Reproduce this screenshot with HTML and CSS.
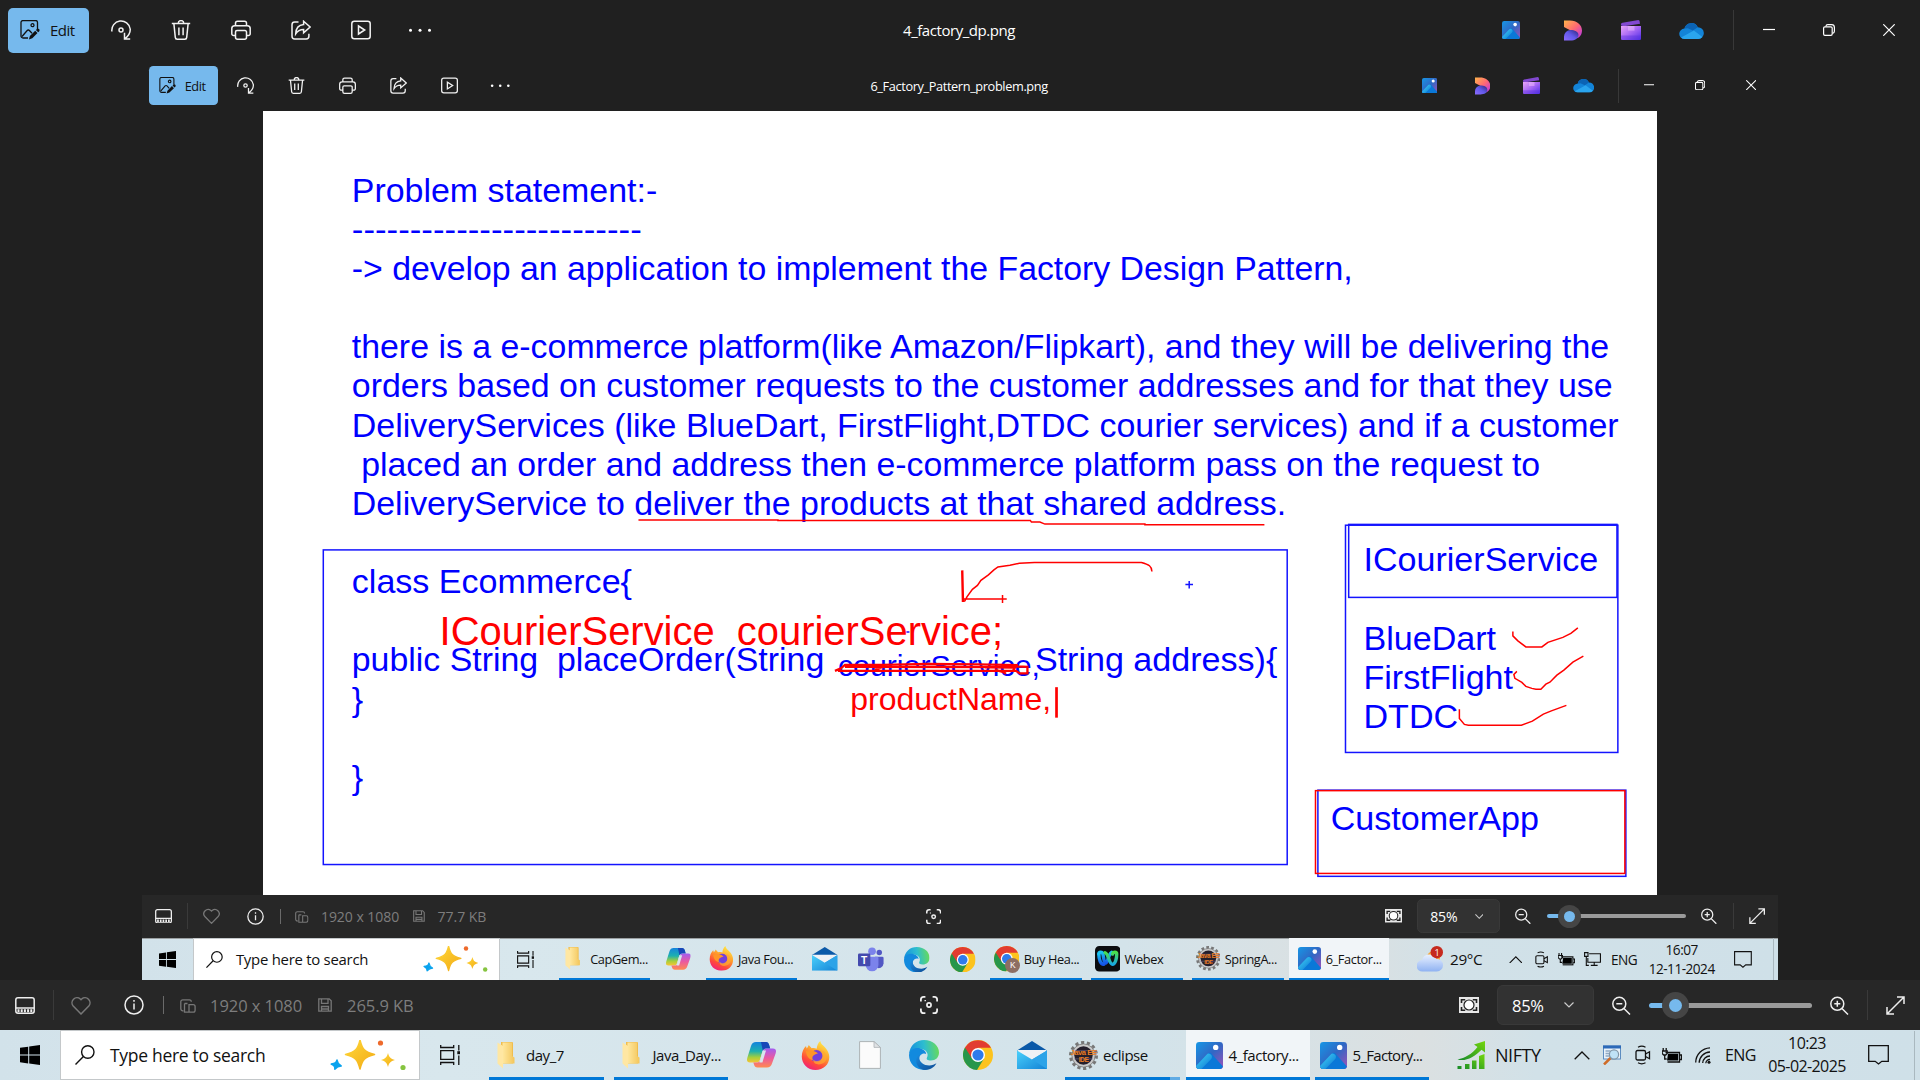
FILE: index.html
```html
<!DOCTYPE html>
<html lang="en">
<head>
<meta charset="utf-8">
<title>4_factory_dp.png</title>
<link rel="stylesheet" href="styles.css">
</head>
<body>
<svg class="sprite" width="0" height="0" aria-hidden="true">
  <defs>
    <linearGradient id="gPhoto" x1="0" y1="0" x2="1" y2="1"><stop offset="0" stop-color="#1697e6"/><stop offset=".5" stop-color="#3167c4"/><stop offset="1" stop-color="#a052b8"/></linearGradient>
    <linearGradient id="gHill" x1="0" y1="0" x2="1" y2="1"><stop offset="0" stop-color="#43d8f6"/><stop offset="1" stop-color="#0a73d4"/></linearGradient>
    <linearGradient id="gDesA" x1="0" y1="0" x2="1" y2="1"><stop offset="0" stop-color="#ffb54a"/><stop offset=".5" stop-color="#ff6a72"/><stop offset="1" stop-color="#b431f0"/></linearGradient>
    <linearGradient id="gDesB" x1="0" y1="1" x2="1" y2="0"><stop offset="0" stop-color="#8d6cff"/><stop offset=".5" stop-color="#6259ea"/><stop offset="1" stop-color="#2b2579"/></linearGradient>
    <linearGradient id="gClip" x1="0" y1="0" x2="1" y2="1"><stop offset="0" stop-color="#eaa5f8"/><stop offset=".5" stop-color="#a566f3"/><stop offset="1" stop-color="#4a2be6"/></linearGradient>
    <linearGradient id="gFolder" x1="0" y1="0" x2="1" y2="0"><stop offset="0" stop-color="#ffe8a0"/><stop offset="1" stop-color="#f3c65b"/></linearGradient>
    <linearGradient id="gCopA" x1="0" y1="0" x2="0" y2="1"><stop offset="0" stop-color="#1583dd"/><stop offset=".45" stop-color="#1db0b0"/><stop offset=".75" stop-color="#a6cf3c"/><stop offset="1" stop-color="#f8c533"/></linearGradient>
    <linearGradient id="gCopB" x1="0" y1="0" x2="0" y2="1"><stop offset="0" stop-color="#a35cf0"/><stop offset=".5" stop-color="#ea5aa0"/><stop offset="1" stop-color="#ff8a50"/></linearGradient>
    <linearGradient id="gFox" x1=".8" y1="0" x2=".3" y2="1"><stop offset="0" stop-color="#fff04a"/><stop offset=".4" stop-color="#ffa52e"/><stop offset=".75" stop-color="#ff4a3a"/><stop offset="1" stop-color="#f0207c"/></linearGradient>
    <linearGradient id="gEdge" x1="0" y1=".3" x2="1" y2=".2"><stop offset="0" stop-color="#1591dd"/><stop offset=".5" stop-color="#2dbdd0"/><stop offset="1" stop-color="#6bdc53"/></linearGradient>
    <linearGradient id="gEdgeB" x1="0" y1="0" x2="1" y2="1"><stop offset="0" stop-color="#1a8be0"/><stop offset="1" stop-color="#0d4a93"/></linearGradient>
    <linearGradient id="gMail" x1="0" y1="0" x2="1" y2="1"><stop offset="0" stop-color="#4ad0fb"/><stop offset="1" stop-color="#1383d6"/></linearGradient>
    <linearGradient id="gStar" x1="0" y1="0" x2="1" y2="1"><stop offset="0" stop-color="#ffd83a"/><stop offset="1" stop-color="#f2aa14"/></linearGradient>
    <linearGradient id="gNifty" x1="0" y1="1" x2="1" y2="0"><stop offset="0" stop-color="#158a2a"/><stop offset="1" stop-color="#74d60c"/></linearGradient>
    <linearGradient id="gCloud" x1="0" y1="0" x2="0" y2="1"><stop offset="0" stop-color="#e8f0ff"/><stop offset="1" stop-color="#8fb2f2"/></linearGradient>
    <linearGradient id="gWebexA" x1="0" y1="0" x2="0" y2="1"><stop offset="0" stop-color="#19c4f0"/><stop offset="1" stop-color="#1554e8"/></linearGradient>
    <linearGradient id="gWebexB" x1="0" y1="0" x2="0" y2="1"><stop offset="0" stop-color="#4be04a"/><stop offset="1" stop-color="#18a8e0"/></linearGradient>
  </defs>

  <symbol id="edit" viewBox="0 0 20 20"><g fill="none" stroke="#111" stroke-width="1.3"><path d="M8 18H3a2 2 0 0 1-2-2V2.500a2 2 0 0 1 2-2h12.500a2 2 0 0 1 2 2V9"/><path d="M2 16.500l5.200-6a1.500 1.500 0 0 1 2.200 0l2.600 2.800"/><circle cx="12.500" cy="5.200" r="1.500"/></g><path d="M18.400 8.700a1.600 1.600 0 0 1 .7 2.700l-.9.900-2.300-2.300 1-1a1.700 1.700 0 0 1 1.500-.3zM15.200 10.700l2.300 2.400-5.200 5.200-3.400 1.200 1-3.500z" fill="#111"/></symbol>
  <symbol id="rotate" viewBox="0 0 20 20"><path d="M.9 11.500A9.200 9.200 0 1 1 19.200 9c.3 4.200-2.300 7.400-5.400 9.800M13.500 12.800v6.200h5.700"/><circle cx="10" cy="10" r="2"/></symbol>
  <symbol id="trash" viewBox="0 0 20 20"><path d="M.8 3.600h18.400M7.200 3.400a2.800 2.800 0 0 1 5.600 0M2.900 3.800l1.400 13.600a1.900 1.900 0 0 0 1.900 1.800h7.600a1.900 1.900 0 0 0 1.900-1.800l1.400-13.600M7.900 7.500v7.700M12.100 7.500v7.700"/></symbol>
  <symbol id="print" viewBox="0 0 20 20"><path d="M4.500 5.800V3.200a2 2 0 0 1 2-2h7a2 2 0 0 1 2 2v2.600M4.500 15.500H2.600a1.800 1.800 0 0 1-1.800-1.800V8.600a2.800 2.800 0 0 1 2.800-2.800h12.800a2.800 2.800 0 0 1 2.800 2.800v5.100a1.800 1.800 0 0 1-1.800 1.800h-1.900M6 10.500h8a1.500 1.500 0 0 1 1.500 1.500v5.200a2 2 0 0 1-2 2h-7a2 2 0 0 1-2-2V12A1.500 1.500 0 0 1 6 10.500z"/></symbol>
  <symbol id="share" viewBox="0 0 20 20"><path d="M7.500 2H3.700A2.700 2.700 0 0 0 1 4.700v11.500a2.700 2.700 0 0 0 2.700 2.700h11.500a2.700 2.700 0 0 0 2.700-2.700v-2.400M12.600 1.200l6.500 5.800-6.500 5.800V9.600c-3.800 0-6 1.200-7.900 4.200.2-5.100 2.700-8.700 7.900-9.200z"/></symbol>
  <symbol id="play" viewBox="0 0 20 20"><rect x=".8" y="1.300" width="18.400" height="17.400" rx="2.500"/><path d="M7.500 6v8l6.200-4z"/></symbol>
  <symbol id="dots" viewBox="0 0 24 20"><g fill="#fff" stroke="none"><circle cx="2.500" cy="10.300" r="1.500"/><circle cx="12" cy="10.300" r="1.500"/><circle cx="21.500" cy="10.300" r="1.500"/></g></symbol>

  <symbol id="photos" viewBox="0 0 20 20"><rect width="20" height="20" rx="2.500" fill="url(#gPhoto)"/><path d="M0 18.200l8.600-9.400a2 2 0 0 1 3 0l8.400 9.400a2.500 2.500 0 0 1-2.500 1.800h-15A2.500 2.500 0 0 1 0 18.200z" fill="#0a78d8"/><path d="M0 17.700l7.800-8.300a2.300 2.300 0 0 1 4 1.700c0 .6-.3 1.200-.7 1.600L4 20H2.500A2.500 2.500 0 0 1 0 17.700z" fill="url(#gHill)"/><circle cx="14.600" cy="4" r="2" fill="#fff"/></symbol>
  <symbol id="designer" viewBox="0 0 18 20"><path d="M0 0h6c7 0 12 4.500 12 10 0 4.500-2.500 7-5.500 7.800l-4-6.800L0 6.500z" fill="url(#gDesA)"/><path d="M0 20v-4a6.500 6.500 0 0 1 6.500-6.500c4 0 8 1.500 8 5 0 3.500-3.500 5.500-8 5.500z" fill="url(#gDesB)"/></symbol>
  <symbol id="clipchamp" viewBox="0 0 20 20"><path d="M0 5.500v-1c0-1 .6-1.500 1.500-1.700L17.500 0l1 .8.500 3L3 6.200z" fill="#8248d0"/><path d="M0 6h20v12.500a1.500 1.500 0 0 1-1.500 1.500h-17A1.500 1.500 0 0 1 0 18.500z" fill="url(#gClip)"/><path d="M7 6h6.500v4.600H7z" fill="#f5c6ff" opacity=".45"/><path d="M0 15.500h20v3a1.500 1.500 0 0 1-1.500 1.500h-17A1.500 1.500 0 0 1 0 18.500z" fill="#5a32dc" opacity=".4"/></symbol>
  <symbol id="onedrive" viewBox="0 0 26 18"><path d="M5.500 7A7.500 7.500 0 0 1 19.600 5.500a6.200 6.200 0 0 1 .4 12.500H5.500A5.500 5.500 0 0 1 5.500 7z" fill="#1384d8"/><path d="M5.500 7A7.500 7.500 0 0 1 19.600 5.500L14.500 9 9 6.500z" fill="#0b63b4"/><path d="M2 16.500L15.500 9l9 7a6 6 0 0 1-4.500 2H5.500a5.500 5.500 0 0 1-3.500-1.500z" fill="#2aa5ee"/></symbol>

  <symbol id="min" viewBox="0 0 12 12"><path d="M0 5.500h12"/></symbol>
  <symbol id="restore" viewBox="0 0 12 12"><rect x=".6" y="2.800" width="8.600" height="8.600" rx="1.300"/><path d="M2.800 2.500C3 1.300 3.600.7 4.800.7h3.800a2.800 2.800 0 0 1 2.800 2.800v3.800c0 1.200-.8 1.800-1.900 2"/></symbol>
  <symbol id="close" viewBox="0 0 12 12"><path d="M.3.3l11.400 11.400M11.700.3L.3 11.700"/></symbol>

  <symbol id="film" viewBox="0 0 20 17"><rect x=".8" y=".8" width="18.400" height="15.400" rx="2.200"/><path d="M1 11h18"/><path d="M2.500 13.800h15" stroke-width="3" stroke-dasharray="2 1.200"/></symbol>
  <symbol id="heart" viewBox="0 0 20 19"><path d="M10 18l-7.800-8a5 5 0 0 1 7.100-7l.7.700.7-.7a5 5 0 0 1 7.100 7z"/></symbol>
  <symbol id="info" viewBox="0 0 20 20"><circle cx="10" cy="10" r="9"/><path d="M10 8.500v6M10 5v1.800"/></symbol>
  <symbol id="dims" viewBox="0 0 16 14"><path d="M3.500 11.800H2.800A2 2 0 0 1 .8 9.800V2.800a2 2 0 0 1 2-2h6.500a2 2 0 0 1 2 2M4.500 4.500v8.700h8.700a1.900 1.900 0 0 0 1.900-1.900V7.500a1.900 1.900 0 0 0-1.900-1.900H9v7.500M4.500 4.500h3"/></symbol>
  <symbol id="save" viewBox="0 0 14 14"><path d="M.8.800h10.400l2 2v10.400H.8zM3.500.8v4.500h6.500V.8M3.500 13V8.500h7V13M4 11h6"/></symbol>
  <symbol id="scan" viewBox="0 0 20 20"><path d="M1 6V4a3 3 0 0 1 3-3h2M14 1h2a3 3 0 0 1 3 3v2M19 14v2a3 3 0 0 1-3 3h-2M6 19H4a3 3 0 0 1-3-3v-2" stroke-width="2"/><circle cx="10" cy="10" r="2.300" stroke-width="1.900"/><path d="M5 5.200h1.600" stroke-width="1.500"/></symbol>
  <symbol id="fit" viewBox="0 0 20 16"><rect width="20" height="16" fill="#e8e8e8" stroke="none"/><path d="M2.500 6V2.800h3.700M13.800 2.800h3.700V6M17.500 10v3.200h-3.700M6.200 13.200H2.500V10" stroke="#222" stroke-width="1.600"/><circle cx="10" cy="8" r="5.600" fill="#222" stroke="none"/><circle cx="10" cy="8" r="4.400" fill="#fff" stroke="none"/></symbol>
  <symbol id="chev" viewBox="0 0 10 6"><path d="M.5.500L5 5 9.500.5"/></symbol>
  <symbol id="zout" viewBox="0 0 19 19"><circle cx="7.300" cy="7.800" r="6.500"/><path d="M12 12.500l6 6M4.300 7.800h6"/></symbol>
  <symbol id="zin" viewBox="0 0 19 19"><circle cx="7.300" cy="7.800" r="6.500"/><path d="M12 12.500l6 6M4.300 7.800h6M7.300 4.800v6"/></symbol>
  <symbol id="expand" viewBox="0 0 19 19"><path d="M1 18L18 1M11 1h7v7M1 11v7h7"/></symbol>

  <symbol id="start" viewBox="0 0 20 20"><path d="M0 2.800L8.200 1.700v7.800H0zM9.200 1.500L20 0v9.500H9.200zM0 10.500h8.200v7.900L0 17.300zM9.200 10.500H20V20L9.200 18.500z" fill="#000"/></symbol>
  <symbol id="loupe" viewBox="0 0 20 20"><g fill="none" stroke="#111" stroke-width="1.400"><circle cx="12.800" cy="7" r="6.200"/><path d="M8.400 11.500L.5 19.500"/></g></symbol>
  <symbol id="sparkles" viewBox="0 0 78 32"><path d="M30 0c2.300 9.500 4.500 12 14.500 14.500C34.500 17 32.300 19.500 30 29c-2.300-9.500-4.500-12-14.500-14.500C25.500 12 27.700 9.500 30 0z" fill="url(#gStar)" stroke="url(#gStar)" stroke-width="1.500" stroke-linejoin="round"/><path d="M58 13c1.200 4.300 2.300 5.600 7 7-4.700 1.400-5.800 2.700-7 7-1.200-4.300-2.300-5.600-7-7 4.700-1.400 5.800-2.700 7-7z" fill="url(#gStar)"/><path d="M7 20c.4 3.200 1.300 4.200 4.200 6-3.100 0-4.200.7-6.400 3.200.3-2.500-.3-3.500-3.600-5.200C5 23.600 6 23 7 20z" fill="#0aa3ee" stroke="#0aa3ee" stroke-width="1.500" stroke-linejoin="round"/><circle cx="50.500" cy="3" r="2.600" fill="#ee6a2c"/><circle cx="73" cy="27.500" r="2.600" fill="#86c440"/></symbol>
  <symbol id="taskview" viewBox="0 0 20 20"><g fill="none" stroke="#111" stroke-width="1.300"><path d="M.7 0v2.500h13V0M.7 20v-2.500h13V20M.7 5.700h13v8.600H.7zM18.800 0v5.500M18.800 10.500V20"/></g><path d="M17.300 6.200h3v3h-3z" fill="#111"/></symbol>
  <symbol id="folder" viewBox="0 0 18 27"><path d="M4 0h11a1 1 0 0 1 1 1v20.500H4z" fill="#f0bd4e"/><path d="M5.500.5H15v13.500l2.500 1.500v6H5.500z" fill="url(#gFolder)"/><path d="M.5.500L6 4v22.500L.5 21.500z" fill="#ffe7a3"/></symbol>
  <symbol id="copilot" viewBox="0 0 29 26"><path d="M9 0h9.500c2 0 3 1.300 3.500 3l1 3.500h-4c-2 0-3 1-3.600 3L13 17.500c-.6 2-1.700 3-3.500 3H3c-3 0-3.500-2-2.600-5L4 4c.8-2.600 2.500-4 5-4z" fill="url(#gCopA)"/><path d="M14 0h5c1.700 0 2.700 1.300 3.200 3l1 3.500h-4c-1.600 0-2.700.6-3.400 2.200z" fill="#1747b8"/><path d="M20 25.500h-9.500c-2 0-3-1.300-3.500-3l-.7-2H10c2 0 3-1 3.600-3L16 9.500c.6-2 1.700-3 3.500-3H26c3 0 3.500 2 2.600 5L25 21.500c-.8 2.600-2.500 4-5 4z" fill="url(#gCopB)"/><path d="M15.800 8.500h3.200l-3.600 12h-3z" fill="#d8e7ed"/></symbol>
  <symbol id="firefox" viewBox="0 0 28 29"><path d="M14 29C6 29 .3 23 .3 15.500.3 11 2 7.500 4.500 5l.7 2.500C6.300 6 7 5 7.200 4l3 3.200c2-.2 3.500-.1 5 .5C15.500 4.500 16.500 2 18.800 0c.5 3.500 3.500 4.500 6 8 1.700 2.400 3 5 3 8C27.800 23.500 22 29 14 29z" fill="url(#gFox)"/><circle cx="15" cy="15" r="6" fill="#7340dc"/><path d="M4.500 10c3 .5 5-.5 7.500 0 1.800.4 3.600 1.500 4.500 2.500-2 .3-3 .8-4.500 2-1.200 1-1.500 2.500-.6 4.500C7 18.500 4.500 14 4.500 10z" fill="#ff9628"/><path d="M11 18c3 3.500 8.500 2.500 10-2 1-3-1-6-3-7 5 0 8 4 7 9-1.500 5-8 7-12 4z" fill="#ffab30" opacity=".7"/></symbol>
  <symbol id="doc" viewBox="0 0 22 28"><path d="M.6.6H15l6.400 5.800v21H.6z" fill="#fbfbfb" stroke="#adb3b6" stroke-width="1"/><path d="M15 .6v5.800h6.400z" fill="#dfe2e4" stroke="#adb3b6" stroke-width=".8"/></symbol>
  <symbol id="edge" viewBox="0 0 30 30"><path d="M0 14C1 5.500 7 0 15 0c9 0 15 6 15 12.500 0 5-3.500 8-8 8-3.500 0-5-1.200-4-3 1.500-2.500.7-7-5-8.500C7.500 8 3 10 0 14z" fill="url(#gEdge)"/><path d="M0 15C1 9.500 6.500 7 11.500 8.500c3.500 1 5.600 3.200 5.600 5.500-2-1.500-6.600 0-7 4.500C9.600 24 14 29 19.500 29.300 9 32 0 25 0 15z" fill="#128ade"/><path d="M10.200 17c0 5.500 4.800 8.500 10 8.500 3 0 5.300-1 7.300-2.200C25 27.700 21 30 16 30c-5-.4-9-4.500-8.800-9.500.1-2.500 1.300-5 3.900-6.500-.6 1-.9 2-.9 3z" fill="url(#gEdgeB)"/></symbol>
  <symbol id="chrome" viewBox="0 0 30 30"><circle cx="15" cy="15" r="15" fill="#fcc31e"/><path d="M15 15L2 7.500A15 15 0 0 0 14 30l7-11.500z" fill="#27964a"/><path d="M2 7.500A15 15 0 0 1 28 7.800H15L8.600 18z" fill="#e23c30"/><circle cx="15" cy="15" r="7" fill="#fff"/><circle cx="15" cy="15" r="5.600" fill="#2f7bec"/></symbol>
  <symbol id="mail" viewBox="0 0 30 28"><path d="M0 9.500L15 0l15 9.500z" fill="#0b59a8"/><path d="M1 9h28v12H1z" fill="#eef1f5"/><path d="M0 9.500l15 9 15-9V28H0z" fill="url(#gMail)"/><path d="M15 18.500L30 9.500V28z" fill="#2ca3e8"/></symbol>
  <symbol id="gear" viewBox="0 0 30 30"><circle cx="15" cy="15" r="13" fill="none" stroke="#777" stroke-width="4" stroke-dasharray="3.200 2.640"/><circle cx="15" cy="15" r="12" fill="#c9c9c9" stroke="#777" stroke-width=".8"/><circle cx="15" cy="15" r="9.500" fill="#251f2c"/><path d="M6 10h18M5.500 18.500h19" stroke="#6a6288" stroke-width=".7"/></symbol>
  <symbol id="nifty" viewBox="0 0 28 28"><path d="M.5 18.500C8 17 15 13 20.500 6l-3.500-2.500L28 0v11.500l-3.500-2.800C17 16.500 9 20.500.5 18.500z" fill="url(#gNifty)"/><path d="M.5 25h4v3h-4zM8 23h4.500v5H8zM15 19.500h4.500V28H15zM22 15l5.500-2v15H22z" fill="url(#gNifty)"/></symbol>
  <symbol id="up" viewBox="0 0 16 9"><path d="M.7 8.300L8 1l7.300 7.300"/></symbol>
  <symbol id="magn" viewBox="0 0 18 20"><rect x=".5" y="1" width="17" height="13" fill="#e9f2fa" stroke="#5d8cc0" stroke-width="1"/><path d="M0 .5h18v3H0z" fill="#2c69b8" stroke="none"/><path d="M2.500 6h5M2.500 8.500h4M2.500 11h4" stroke="#8fa9c4"/><path d="M7.500 13L1 19.500" stroke="#cf6c28" stroke-width="2.500"/><circle cx="11" cy="9.500" r="4.600" fill="#bfe2f7" stroke="#8196a8" stroke-width="1.200"/></symbol>
  <symbol id="meet" viewBox="0 0 16 20"><rect x="1" y="5.500" width="9.500" height="9.500" rx="1.500"/><path d="M10.500 9l4-2.200v6.900l-4-2.200M3 2.200a8 8 0 0 1 7.500 0M3 17.800a8 8 0 0 0 7.500 0"/></symbol>
  <symbol id="battery" viewBox="0 0 20 15"><path d="M3.500 4.500h14V14h-12M17.500 7h2v4.500h-2"/><path d="M6 5.800h10.200v6.800H5z" fill="#000" stroke="none"/><path d="M1.200 0v3M4.200 0v3M.2 3h5v2.500l-1.500 1.500h-2L.2 5.500zM2.700 7v4h2"/></symbol>
  <symbol id="net" viewBox="0 0 20 17"><path d="M6 2h13.300v10H4.500V7M12 12v3.500M8 15.700h8M.7.700h4v4.500h-4zM2.700 5.200v10.500h3"/></symbol>
  <symbol id="wifi" viewBox="0 0 16 17"><path d="M.7 15.500A15 15 0 0 1 15 .8M4.200 15.800A11 11 0 0 1 15 5M7.700 16A7.500 7.500 0 0 1 15 9M10.800 16.200a4 4 0 0 1 4.200-3.700"/><circle cx="14" cy="15.200" r="1.500" fill="#111" stroke="none"/></symbol>
  <symbol id="note" viewBox="0 0 21 20"><path d="M.7.700h19.600v15.600h-6.500L10.500 19l-3.300-2.700H.7z"/></symbol>
</svg>

<main class="viewer">
  <header class="toolbar">
    <button class="edit"><svg><use href="#edit"/></svg><span>Edit</span></button>
    <nav class="tools">
      <svg><use href="#rotate"/></svg><svg><use href="#trash"/></svg><svg><use href="#print"/></svg><svg><use href="#share"/></svg><svg><use href="#play"/></svg><svg class="more"><use href="#dots"/></svg>
    </nav>
    <h1 class="title">4_factory_dp.png</h1>
    <div class="apps">
      <svg class="a-photos"><use href="#photos"/></svg><svg class="a-designer"><use href="#designer"/></svg><svg class="a-clip"><use href="#clipchamp"/></svg><svg class="a-drive"><use href="#onedrive"/></svg>
    </div>
    <div class="caption"><svg><use href="#min"/></svg><svg><use href="#restore"/></svg><svg><use href="#close"/></svg></div>
  </header>

  <section class="stage">
    <div class="viewer nested">
      <header class="toolbar">
        <button class="edit"><svg><use href="#edit"/></svg><span>Edit</span></button>
        <nav class="tools">
          <svg><use href="#rotate"/></svg><svg><use href="#trash"/></svg><svg><use href="#print"/></svg><svg><use href="#share"/></svg><svg><use href="#play"/></svg><svg class="more"><use href="#dots"/></svg>
        </nav>
        <h1 class="title long">6_Factory_Pattern_problem.png</h1>
        <div class="apps">
          <svg class="a-photos"><use href="#photos"/></svg><svg class="a-designer"><use href="#designer"/></svg><svg class="a-clip"><use href="#clipchamp"/></svg><svg class="a-drive"><use href="#onedrive"/></svg>
        </div>
        <div class="caption"><svg><use href="#min"/></svg><svg><use href="#restore"/></svg><svg><use href="#close"/></svg></div>
      </header>

      <section class="stage">
        <svg class="board" viewBox="263 111 1394 784" preserveAspectRatio="none">
          <g class="note-text">
            <text x="351.800" y="201.600" textLength="305.500" lengthAdjust="spacingAndGlyphs">Problem statement:-</text>
            <text x="351.800" y="241.200" textLength="290" lengthAdjust="spacingAndGlyphs">-------------------------</text>
            <text x="351.800" y="279.900" textLength="1001" lengthAdjust="spacingAndGlyphs">-&gt; develop an application to implement the Factory Design Pattern,</text>
            <text x="351.800" y="358.300" textLength="1257.500" lengthAdjust="spacingAndGlyphs">there is a e-commerce platform(like Amazon/Flipkart), and they will be delivering the</text>
            <text x="351.800" y="397.500" textLength="1261" lengthAdjust="spacingAndGlyphs">orders based on customer requests to the customer addresses and for that they use</text>
            <text x="351.800" y="436.600" textLength="1267" lengthAdjust="spacingAndGlyphs">DeliveryServices (like BlueDart, FirstFlight,DTDC courier services) and if a customer</text>
            <text x="351.800" y="475.800" textLength="1188.500" lengthAdjust="spacingAndGlyphs"> placed an order and address then e-commerce platform pass on the request to</text>
            <text x="351.800" y="515" textLength="934.500" lengthAdjust="spacingAndGlyphs">DeliveryService to deliver the products at that shared address.</text>
            <text x="351.800" y="593.200">class Ecommerce{</text>
            <text x="351.800" y="671.600" textLength="472.500" lengthAdjust="spacingAndGlyphs">public String  placeOrder(String</text>
            <text x="838" y="675.900" class="small">courierService,</text>
            <text x="1035" y="671.600">String address){</text>
            <text x="351.800" y="711">}</text>
            <text x="351.800" y="789.400">}</text>
            <text x="1363.600" y="571.300">ICourierService</text>
            <text x="1363.600" y="649.700">BlueDart</text>
            <text x="1363.600" y="688.900">FirstFlight</text>
            <text x="1363.600" y="728">DTDC</text>
            <text x="1330.800" y="829.700">CustomerApp</text>
          </g>
          <g class="blue">
            <rect x="323.300" y="550" width="964" height="314.700"/>
            <rect x="1345.600" y="525.300" width="272.400" height="227.300"/>
            <rect x="1348.800" y="524.500" width="268.300" height="73"/>
            <rect x="1318" y="790.300" width="308" height="86.200"/>
            <path d="M1185.500 584.700h7.600M1189.300 581v7.600M906.500 632h3"/>
          </g>
          <g class="red-text">
            <text x="439.600" y="644.900" textLength="563.500" lengthAdjust="spacingAndGlyphs">ICourierService  courierService;</text>
            <text x="850.300" y="710.400" class="pending">productName,</text>
          </g>
          <g class="red">
            <rect x="1315.600" y="790.800" width="309.400" height="82.800"/>
            <path d="M638.500 520h139.500v.7h252.500l1 1.500h8.500l5 2h100v.7h119.500"/>
            <path d="M1152 571.500c0-5-3-7-10.500-9h-107l-15 .8-9.500 2-12 1.700-4 3-5.500 5-7.500 5.500-3.500 5-5 4-5.500 7.500-2 4-2 .3M962.800 599h44M1002.600 595v8"/>
            <path d="M962.300 570.500l.7 30.500h1.500" stroke-width="2.400"/>
            <path d="M1513 631.500v4.500l5 5 8 6h16l6-4.500 15-5 8-4 7-5.500M1517 671.500l-3 3 1 4 7 4 4 4 6 2 4 .8h5l5-5 4-2 7-7 7-5 9-8 10.500-6M1459.500 709.500v9l5 6 4 .8h53l11-4 11-7 8-3.300 15-5.500"/>
          </g>
          <path class="strike" d="M835 671l6-2.500 4-3.500h38l45-.9 50 .3 40 .8M838 671h178l4 2.500h7.500v-6.500l-12-.5M845 667l171 .2M985 667.500l30 .3-2 3M995 670l8 2 3 1.800M875 670l8-3"/>
          <path class="cursor" d="M1056.600 687.300v30.500"/>
        </svg>
      </section>

      <footer class="status">
        <svg class="s-film"><use href="#film"/></svg><i class="rule"></i>
        <svg class="s-heart"><use href="#heart"/></svg><svg class="s-info"><use href="#info"/></svg><i class="rule lit"></i>
        <svg class="s-dims"><use href="#dims"/></svg><span class="dims">1920 x 1080</span>
        <svg class="s-save"><use href="#save"/></svg><span class="size">77.7 KB</span>
        <svg class="s-scan"><use href="#scan"/></svg>
        <div class="zoomer">
          <svg class="s-fit"><use href="#fit"/></svg>
          <div class="percent"><span>85%</span><svg><use href="#chev"/></svg></div>
          <svg class="s-zoom"><use href="#zout"/></svg>
          <div class="slider"><b></b><i></i></div>
          <svg class="s-zoom"><use href="#zin"/></svg><i class="rule"></i>
          <svg class="s-expand"><use href="#expand"/></svg>
        </div>
      </footer>

      <footer class="taskbar">
        <svg class="t-start"><use href="#start"/></svg>
        <div class="search"><svg class="t-loupe"><use href="#loupe"/></svg><span>Type here to search</span><svg class="t-spark"><use href="#sparkles"/></svg></div>
        <svg class="t-view"><use href="#taskview"/></svg>
        <div class="task w107"><svg class="i-folder"><use href="#folder"/></svg><span>CapGem...</span></div>
        <div class="pins p1"><svg class="i-copilot"><use href="#copilot"/></svg></div>
        <div class="task w107 tight"><svg class="i-fox"><use href="#firefox"/></svg><span>Java Fou...</span></div>
        <div class="pins p2"><svg class="i-mail"><use href="#mail"/></svg><svg class="i-big" viewBox="0 0 30 30"><circle cx="25" cy="6.500" r="3.200" fill="#5258c4"/><circle cx="16.500" cy="5" r="4.500" fill="#7b83eb"/><path d="M20 11.500h8.500a1.500 1.500 0 0 1 1.500 1.500v6.500a5.500 5.500 0 0 1-9 4z" fill="#5258c4"/><path d="M9 11.500h13.500a1.500 1.500 0 0 1 1.500 1.500v8a7.500 7.500 0 0 1-15 0z" fill="#7b83eb"/><rect y="7.500" width="14.500" height="15" rx="1.500" fill="#4349ae"/><text class="glyph-t" x="3.600" y="19.500">T</text></svg><svg class="i-big"><use href="#edge"/></svg><svg class="i-big"><use href="#chrome"/></svg></div>
        <div class="task w107 tight"><div class="badged"><svg class="i-big"><use href="#chrome"/></svg><span class="badge">K</span></div><span>Buy Hea...</span></div>
        <div class="task w107 tight gap11"><svg class="i-big" viewBox="0 0 30 30"><rect width="30" height="30" rx="5" fill="#0c0d10"/><path d="M4.500 9.500c0-3 4-3 4.800 0 1 4 1 10.500 3.200 10.500 2.500 0 3-10 7-12.500" fill="none" stroke="url(#gWebexA)" stroke-width="4" stroke-linecap="round"/><path d="M12 8c4 1 4.500 13.500 8.500 13.500 3.500 0 5-7 5-12 0-3-4-3-5 0" fill="none" stroke="url(#gWebexB)" stroke-width="4" stroke-linecap="round"/><path d="M4.500 9.500c0 6 2 12.500 6 12" fill="none" stroke="url(#gWebexA)" stroke-width="4" stroke-linecap="round"/></svg><span>Webex</span></div>
        <div class="task w107 tight gap11"><svg class="i-ecl" viewBox="0 0 30 30"><use href="#gear"/><text class="java" x="1.500" y="14.800" textLength="27" lengthAdjust="spacingAndGlyphs">Java EE</text><text class="java ide" x="10" y="21.800">IDE</text></svg><span>SpringA...</span></div>
        <div class="task w117 active gap6"><svg class="i-photo"><use href="#photos"/></svg><span>6_Factor...</span></div>
        <div class="news"><svg class="i-weather" viewBox="0 0 32 32"><circle cx="20" cy="14" r="8" fill="#f3a63b"/><path d="M6 17a9.500 9.500 0 0 1 17.500-1.500A7.300 7.300 0 0 1 24 31H7A6.500 6.500 0 0 1 6 17z" fill="url(#gCloud)"/><circle cx="24" cy="7.500" r="7.500" fill="#c62a1e"/><text class="alert" x="24" y="11.500">1</text></svg><span>29°C</span></div>
        <div class="tray nested-tray"><svg class="y-up"><use href="#up"/></svg><svg class="y-meet"><use href="#meet"/></svg><svg class="y-bat"><use href="#battery"/></svg><svg class="y-net"><use href="#net"/></svg><span class="lang">ENG</span>
          <div class="clock"><span class="time">16:07</span><span class="date">12-11-2024</span></div>
          <svg class="y-note"><use href="#note"/></svg><i class="peek"></i></div>
      </footer>
    </div>
  </section>

  <footer class="status">
    <svg class="s-film"><use href="#film"/></svg><i class="rule"></i>
    <svg class="s-heart"><use href="#heart"/></svg><svg class="s-info"><use href="#info"/></svg><i class="rule lit"></i>
    <svg class="s-dims"><use href="#dims"/></svg><span class="dims">1920 x 1080</span>
    <svg class="s-save"><use href="#save"/></svg><span class="size">265.9 KB</span>
    <svg class="s-scan"><use href="#scan"/></svg>
    <div class="zoomer">
      <svg class="s-fit"><use href="#fit"/></svg>
      <div class="percent"><span>85%</span><svg><use href="#chev"/></svg></div>
      <svg class="s-zoom"><use href="#zout"/></svg>
      <div class="slider"><b></b><i></i></div>
      <svg class="s-zoom"><use href="#zin"/></svg><i class="rule"></i>
      <svg class="s-expand"><use href="#expand"/></svg>
    </div>
  </footer>

  <footer class="taskbar">
    <svg class="t-start"><use href="#start"/></svg>
    <div class="search"><svg class="t-loupe"><use href="#loupe"/></svg><span>Type here to search</span><svg class="t-spark"><use href="#sparkles"/></svg></div>
    <svg class="t-view"><use href="#taskview"/></svg>
    <div class="task folder first"><svg class="i-folder"><use href="#folder"/></svg><span>day_7</span></div>
    <div class="task folder gap10"><svg class="i-folder"><use href="#folder"/></svg><span>Java_Day...</span></div>
    <div class="pins p3"><svg class="i-copilot"><use href="#copilot"/></svg><svg class="i-fox"><use href="#firefox"/></svg><svg class="i-doc"><use href="#doc"/></svg><svg class="i-big"><use href="#edge"/></svg><svg class="i-big"><use href="#chrome"/></svg><svg class="i-mail"><use href="#mail"/></svg></div>
    <div class="task w114 tight stacked"><svg class="i-ecl" viewBox="0 0 30 30"><use href="#gear"/><text class="java" x="1.500" y="14.800" textLength="27" lengthAdjust="spacingAndGlyphs">Java EE</text><text class="java ide" x="10" y="21.800">IDE</text></svg><span>eclipse</span></div>
    <div class="task w124 active gap6"><svg class="i-photo"><use href="#photos"/></svg><span>4_factory...</span></div>
    <div class="task w114 second gap5"><svg class="i-photo"><use href="#photos"/></svg><span>5_Factory...</span></div>
    <div class="news nifty"><svg class="i-nifty"><use href="#nifty"/></svg><span>NIFTY</span></div>
    <div class="tray"><svg class="y-up"><use href="#up"/></svg><svg class="y-mag"><use href="#magn"/></svg><svg class="y-meet"><use href="#meet"/></svg><svg class="y-bat"><use href="#battery"/></svg><svg class="y-wifi"><use href="#wifi"/></svg><span class="lang">ENG</span>
      <div class="clock"><span class="time">10:23</span><span class="date">05-02-2025</span></div>
      <svg class="y-note"><use href="#note"/></svg><i class="peek"></i></div>
  </footer>
</main>
</body>
</html>
```
FILE: styles.css
```css
* { box-sizing: border-box; }
html, body { margin: 0; background: #202020; overflow: hidden; }
body { font-family: "Open Sans", "Noto Sans", sans-serif; }
.sprite { position: absolute; }
svg { flex: none; display: block; }

.viewer { width: 1920px; height: 1080px; display: flex; flex-direction: column; background: #202020; }
.nested { zoom: 0.852; flex: none; }
.stage { height: 920px; display: flex; justify-content: center; align-items: flex-start; }

/* Title bar */
.toolbar { height: 60px; display: grid; grid-template-columns: 91px 359px 1018px 1fr 187.500px; align-items: center; color: #fff; flex: none; }
.edit { margin: 0 0 0 8px; width: 81px; height: 45px; border: 0; border-radius: 5px; background: #76b9ed; color: #111; display: flex; align-items: center; padding: 0 0 0 12px; gap: 10px; font: 15px "Open Sans", sans-serif; letter-spacing: -0.500px; }
.edit svg { width: 20px; height: 20px; }
.tools { display: flex; }
.tools svg { width: 20px; height: 20px; margin: 0 20px; fill: none; stroke: #f2f2f2; stroke-width: 1.500; }
.tools .more { width: 24px; margin: 0 17px; }
.title { margin: 0; text-align: center; font-size: 15px; font-weight: 400; letter-spacing: -0.450px; white-space: nowrap; }
.apps { display: flex; align-items: center; padding-left: 34px; }
.a-photos { width: 18px; height: 18px; }
.a-designer { width: 18px; height: 21px; margin-left: 44px; }
.a-clip { width: 20px; height: 20px; margin-left: 39px; }
.a-drive { width: 25px; height: 17px; margin-left: 38px; }
.caption { height: 40px; border-left: 1px solid #383838; display: flex; align-items: center; gap: 48px; padding-left: 29px; }
.caption svg { width: 12px; height: 12px; margin-top: -1px; fill: none; stroke: #fff; stroke-width: 1.200; }

/* Drawing canvas */
.board { width: 1636px; height: 920px; background: #fff; }
.board text { font-family: "Liberation Sans", Arial, sans-serif; white-space: pre; }
.note-text { font-size: 34.080px; fill: #00f; }
.note-text .small { font-size: 30.300px; }
.red-text { font-size: 40px; fill: #f00; }
.red-text .pending { font-size: 32px; }
.blue { fill: none; stroke: #1414ff; stroke-width: 1.500; }
.red { fill: none; stroke: #f00; stroke-width: 1.500; }
.strike { fill: none; stroke: #f00; stroke-width: 2.300; }
.cursor { stroke: #f00; stroke-width: 2.700; }

/* Photo status bar */
.status { height: 50px; background: #272727; display: flex; align-items: center; flex: none; color: #7d7d7d; font-size: 16.500px; }
.status svg { fill: none; stroke: #eee; stroke-width: 1.500; }
.status > span { letter-spacing: -0.050px; white-space: nowrap; }
.percent span { letter-spacing: -0.250px; }
.rule { width: 1px; height: 30px; background: #3a3a3a; }
.rule.lit { height: 18px; background: #6a6a6a; margin-left: 19px; }
.s-film { width: 20px; height: 17px; margin: 0 18px 0 15px; }
.status .s-heart { width: 20px; height: 19px; margin-left: 17px; stroke: #777; }
.s-info { width: 20px; height: 20px; margin-left: 32.500px; }
.status .s-dims { width: 16px; height: 14px; margin: 1px 14.500px 0 16px; stroke: #777; stroke-width: 1.300; }
.dims { width: 108px; }
.status .s-save { width: 14px; height: 14px; margin: 0 15px 0 0; stroke: #777; stroke-width: 1.300; }
.size { width: 573px; }
.s-scan { width: 18px; height: 18px; }
.zoomer { display: flex; align-items: center; margin-left: 521px; }
.s-fit { width: 20px; height: 16px; }
.percent { margin-left: 18px; width: 97px; height: 40px; border: 1px solid #393939; border-radius: 6px; background: #323232; color: #fff; display: flex; align-items: center; padding-left: 14px; }
.percent span { width: 52px; }
.status .percent svg { width: 10px; height: 6px; stroke: #ccc; stroke-width: 1.200; }
.s-zoom { width: 19px; height: 19px; margin: 0 18px; }
.slider { width: 163px; height: 5px; border-radius: 3px; background: linear-gradient(90deg, #76b9ed 26px, #9a9a9a 26px); position: relative; }
.slider b { position: absolute; left: 13px; top: -11px; width: 27px; height: 27px; border-radius: 50%; background: #454545; }
.slider i { position: absolute; left: 20px; top: -4px; width: 13px; height: 13px; border-radius: 50%; background: #76b9ed; }
.s-expand { width: 19px; height: 19px; margin-left: 18px; }

/* Windows taskbar */
.taskbar { height: 50px; background: linear-gradient(90deg, #d2e2ea 0, #d8e7ed 23%, #d3e3ea 60%, #dbe0e1 74%, #d1e1e8 80%, #cfe0e8 100%); display: flex; align-items: center; flex: none; color: #111; font-size: 15px; letter-spacing: -0.450px; white-space: nowrap; }
.nested .taskbar { border-top: 1px solid #9a9fa1; }
.t-start { width: 20px; height: 20px; margin: 0 20px; }
.search { width: 360px; height: 50px; background: #fff; border: 1px solid #c4c8ca; display: flex; align-items: center; padding-left: 14px; font-size: 17.500px; letter-spacing: -0.300px; }
.t-loupe { width: 20px; height: 20px; margin-right: 15px; }
.search span { width: 220px; }
.t-spark { width: 78px; height: 32px; margin-top: 1px; }
.t-view { width: 20px; height: 20px; margin: 0 29px 0 20px; }
.task { height: 50px; width: 108px; border-bottom: 3px solid #0078d7; display: flex; align-items: center; padding: 3px 0 0 8px; gap: 13px; }
.nested .task { height: 49px; padding-top: 1px; }
.task.w107 { width: 107.500px; gap: 11px; }
.task.w114, .task.folder { width: 114.500px; }
.task.first { gap: 11px; }
.task.w117 { width: 117px; }
.task.w124 { width: 124px; }
.task.tight { padding-left: 4px; gap: 5px; }
.task.second { padding-left: 5px; letter-spacing: -0.700px; }
.task.active { background: #f1f5f8; padding-left: 10px; }
.task.active, .task.second { gap: 6px; }
.task.stacked { border-image: linear-gradient(90deg, #0078d7 104px, #60abe4 104px) 1; border-style: solid; border-width: 0 0 3px; }
.gap5 { margin-left: 5px; }
.gap6 { margin-left: 6px; }
.gap10 { margin-left: 10px; }
.gap11 { margin-left: 11px; }
.pins { display: flex; align-items: center; }
.pins svg { margin: 0 12px; }
.pins .i-copilot, .pins .i-fox { margin: 0 12.500px; }
.pins .i-doc { margin: 0 16.500px; }
.p1 { padding: 0 5px 0 6px; }
.p2 { padding: 0 5px 0 6px; }
.p3 { padding: 0 6px; }
.i-folder { width: 18px; height: 27px; }
.i-copilot { width: 29px; height: 26px; }
.i-fox { width: 29px; height: 29px; }
.i-doc { width: 22px; height: 28px; }
.i-big { width: 30px; height: 30px; }
.i-mail { width: 30px; height: 28px; }
.i-ecl { width: 29px; height: 29px; }
.i-photo { width: 27px; height: 27px; }
.java { font: bold 8px "Liberation Sans", sans-serif; fill: #ea7d24; }
.java.ide { font-size: 7px; }
.glyph-t { font: bold 12px "Liberation Sans", sans-serif; fill: #fff; }
.badged { position: relative; }
.badge { position: absolute; left: 13px; top: 14px; width: 18px; height: 18px; border-radius: 50%; background: #8d6e63; color: #fff; font: 10px/18px "Liberation Sans", sans-serif; text-align: center; }
.news { display: flex; align-items: center; font-size: 18px; margin-left: 33px; width: 108px; gap: 8px; }
.news.nifty { margin-left: 28px; width: 117px; gap: 10px; }
.i-weather { width: 31px; height: 31px; }
.tray .alert, .alert { font: 11px "Open Sans", sans-serif; fill: #fff; text-anchor: middle; }
.i-nifty { width: 28px; height: 28px; }
.tray { flex: 1; display: flex; align-items: center; height: 49px; font-size: 16px; }
.tray svg { fill: none; stroke: #111; stroke-width: 1.300; }
.y-up { width: 16px; height: 9px; }
.y-mag { width: 18px; height: 20px; margin-left: 13px; }
.y-meet { width: 16px; height: 20px; margin-left: 14px; }
.y-bat { width: 20px; height: 15px; margin-left: 11px; }
.y-wifi { width: 16px; height: 17px; margin-left: 13px; }
.y-net { width: 20px; height: 17px; margin-left: 10px; }
.nested-tray .y-meet { margin-left: 15px; }
.lang { margin-left: 14px; width: 28px; letter-spacing: -0.600px; }
.clock { margin-left: 16px; width: 76px; display: flex; flex-direction: column; align-items: center; line-height: 23px; letter-spacing: -0.600px; }
.nested-tray .lang { margin-left: 12px; }
.nested-tray .clock { margin-left: 17px; }
.y-note { width: 21px; height: 20px; margin-left: 23px; }
.peek { width: 1px; height: 49px; background: #a9b8bf; margin-left: auto; margin-right: 5px; }
```
